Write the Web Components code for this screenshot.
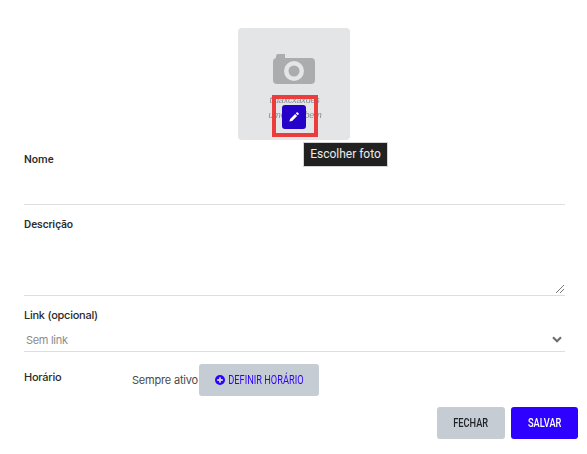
<!DOCTYPE html>
<html lang="pt">
<head>
<meta charset="utf-8">
<title>Item</title>
<style>
  html, body { margin: 0; padding: 0; background: #fff; }
  body { font-family: Inter, "Liberation Sans", sans-serif; color: #212529; }
</style>
</head>
<body>
<item-form></item-form>

<script>
class PhotoPicker extends HTMLElement {
  connectedCallback() {
    const shadow = this.attachShadow({ mode: "open" });
    shadow.innerHTML = `
      <style>
        :host { display: block; width: 112px; height: 112px; position: relative; }
        .box {
          width: 100%;
          height: 100%;
          background: #e4e5e7;
          border-radius: 4px;
          display: flex;
          flex-direction: column;
          align-items: center;
          padding-top: 26px;
          box-sizing: border-box;
        }
        .camera { width: 42px; height: 30px; display: block; }
        .mark {
          position: absolute;
          left: 0;
          right: 0;
          text-align: center;
          font: italic 9px/10px "Liberation Sans", sans-serif;
          color: #8a8c8f;
          letter-spacing: -0.2px;
          filter: blur(0.5px);
          white-space: nowrap;
        }
        .mark.one { top: 67px; padding-left: 1px; }
        .mark.two { top: 82px; word-spacing: 13px; padding-left: 2px; }
        button {
          position: absolute;
          left: 44px;
          top: 77px;
          width: 24px;
          height: 24px;
          padding: 0;
          border: 0;
          border-radius: 3px;
          background: #2500c9;
          display: flex;
          align-items: center;
          justify-content: center;
        }
        button svg { width: 12px; height: 12px; display: block; }
        .highlight {
          position: absolute;
          left: 34px;
          top: 67px;
          width: 46px;
          height: 42px;
          border: 4px solid #eb3d3d;
          box-sizing: border-box;
        }
        .tip {
          position: absolute;
          left: 65px;
          top: 114px;
          width: 85px;
          height: 25px;
          box-sizing: border-box;
          background: #212121;
          border: 1px solid #d4d4d4;
          color: #ececec;
          font: 400 12px/23px Roboto, "Liberation Sans", sans-serif;
          text-align: center;
          white-space: nowrap;
        }
      </style>
      <div class="box">
        <svg class="camera" viewBox="0 0 42 30">
          <path fill="#abacae" fill-rule="evenodd" d="M5 0h7v4h26a4 4 0 0 1 4 4v18a4 4 0 0 1-4 4H4a4 4 0 0 1-4-4V8a4 4 0 0 1 3-3.900V2a2 2 0 0 1 2-2zM21 7a10 10 0 1 0 0 20 10 10 0 0 0 0-20zm0 4.500a5.500 5.500 0 1 1 0 11 5.500 5.500 0 0 1 0-11z"/>
        </svg>
      </div>
      <div class="mark one">ttdaxcxaxdes</div>
      <div class="mark two">umcx bem</div>
      <button aria-label="Escolher foto">
        <svg viewBox="0 0 12 12">
          <path fill="#fff" d="M8.600 1.400a.8.800 0 0 1 1.100 0l.9.900a.8.800 0 0 1 0 1.100l-.9.900-2-2zM7.100 2.900l2 2-5 5-2.700.7.700-2.700z"/>
        </svg>
      </button>
      <div class="highlight"></div>
      <div class="tip">Escolher foto</div>
    `;
  }
}

class FormField extends HTMLElement {
  connectedCallback() {
    const shadow = this.attachShadow({ mode: "open" });
    shadow.innerHTML = `
      <style>
        :host { display: block; }
        label {
          display: block;
          padding-top: var(--label-nudge, 0);
          font: 500 11px/14px var(--label-font, Inter), "Liberation Sans", sans-serif;
          letter-spacing: var(--label-spacing, -0.25px);
          color: #2b2b2b;
        }
        .control {
          border-bottom: 1px solid #dedede;
          box-sizing: border-box;
          height: var(--control-height, 38px);
          position: relative;
        }
      </style>
      <label>${this.getAttribute("label")}</label>
      <div class="control"><slot></slot></div>
    `;
  }
}

class DsButton extends HTMLElement {
  connectedCallback() {
    const shadow = this.attachShadow({ mode: "open" });
    shadow.innerHTML = `
      <style>
        :host { display: inline-block; }
        button {
          display: flex;
          align-items: center;
          justify-content: center;
          gap: var(--btn-gap, 0);
          width: var(--btn-width, 68px);
          height: 32px;
          padding: 0;
          border: 0;
          border-radius: 3px;
          background: var(--btn-bg, #c6ccd4);
          color: var(--btn-color, #212529);
          font: var(--btn-weight, 500) 12px/14px Roboto, "Liberation Sans", sans-serif;
          text-transform: uppercase;
        }
        .txt {
          display: inline-block;
          transform: scaleX(var(--btn-scale, 0.77));
          margin: 0 calc(-1 * var(--btn-trim, 0px));
          white-space: nowrap;
        }
      </style>
      <button><slot name="icon"></slot><span class="txt"><slot></slot></span></button>
    `;
  }
}

class ItemForm extends HTMLElement {
  connectedCallback() {
    const shadow = this.attachShadow({ mode: "open" });
    shadow.innerHTML = `
      <style>
        :host { display: block; width: 587px; height: 454px; box-sizing: border-box; padding-top: 28px; overflow: hidden; }
        .fields { padding: 0 22px 0 24px; display: flex; flex-direction: column; }
        photo-picker { margin-left: 238px; }
        .nome { margin-top: 12px; --control-height: 38px; --label-font: Roboto; --label-spacing: 0; --label-nudge: 1px; }
        .desc { margin-top: 12px; --control-height: 64px; --label-font: Roboto; --label-spacing: 0; --label-nudge: 1px; }
        .link { margin-top: 12px; --control-height: 30px; }
        .resize { position: absolute; right: 1px; bottom: 2px; width: 8px; height: 8px; display: block; }
        .value {
          font: 400 11px/14px Inter, "Liberation Sans", sans-serif;
          letter-spacing: -0.3px;
          color: #8c8c8c;
          padding: 11px 0 0 2px;
        }
        .chev { position: absolute; right: 3px; top: 14px; width: 10px; height: 7px; display: block; }
        .hours { display: flex; align-items: flex-start; margin-top: 12px; }
        .hours .name {
          width: 108px;
          font: 500 11px/14px Inter, "Liberation Sans", sans-serif;
          letter-spacing: -0.25px;
          color: #2b2b2b;
          margin-top: 6px;
        }
        .hours .state {
          width: 67px;
          font: 400 11px/14px Inter, "Liberation Sans", sans-serif;
          letter-spacing: -0.2px;
          color: #4a4a4a;
          margin-top: 9px;
          white-space: nowrap;
        }
        .hours ds-button { --btn-width: 120px; --btn-color: #2e00ff; --btn-gap: 3px; --btn-scale: 0.77; --btn-trim: 11.5px; --btn-weight: 400; }
        .plus { width: 10px; height: 10px; display: block; }
        .actions { display: flex; justify-content: flex-end; gap: 6px; margin-top: 11px; padding-right: 9px; }
        .primary { --btn-bg: #2e00ff; --btn-color: #fff; --btn-width: 67px; }
      </style>
      <photo-picker></photo-picker>
      <div class="fields">
        <form-field class="nome" label="Nome"></form-field>
        <form-field class="desc" label="Descrição">
          <svg class="resize" viewBox="0 0 8 8"><path stroke="#767676" stroke-width="1" d="M0 8 8 0M4 8l4-4"/></svg>
        </form-field>
        <form-field class="link" label="Link (opcional)">
          <div class="value">Sem link</div>
          <svg class="chev" viewBox="0 0 10 7"><path fill="none" stroke="#6e6e6e" stroke-width="2.200" d="M1 1.200l4 4 4-4"/></svg>
        </form-field>
        <div class="hours">
          <div class="name">Horário</div>
          <div class="state">Sempre ativo</div>
          <ds-button>
            <svg slot="icon" class="plus" viewBox="0 0 10 10"><circle cx="5" cy="5" r="5" fill="#2e00ff"/><path stroke="#c6ccd4" stroke-width="1.800" d="M5 2.200v5.600M2.200 5h5.600"/></svg>
            Definir horário
          </ds-button>
        </div>
      </div>
      <div class="actions">
        <ds-button>Fechar</ds-button>
        <ds-button class="primary">Salvar</ds-button>
      </div>
    `;
  }
}

customElements.define("photo-picker", PhotoPicker);
customElements.define("form-field", FormField);
customElements.define("ds-button", DsButton);
customElements.define("item-form", ItemForm);
</script>
</body>
</html>
